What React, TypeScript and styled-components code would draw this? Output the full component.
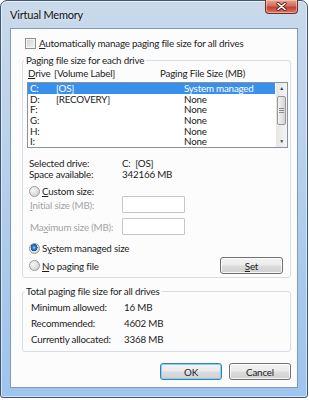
import React from 'react'
import styled, { createGlobalStyle, css } from 'styled-components'

const GlobalStyle = createGlobalStyle`
	html, body {
		margin: 0;
		padding: 0;
		background: #ffffff;
	}
	body {
		font-family: Lato, 'Liberation Sans', sans-serif;
		font-size: 9.8px;
		letter-spacing: -0.2px;
		color: #1c1c1c;
	}
`

const drives = [
	{ letter: 'C:', label: '[OS]', size: 'System managed', selected: true },
	{ letter: 'D:', label: '[RECOVERY]', size: 'None' },
	{ letter: 'F:', label: '', size: 'None' },
	{ letter: 'G:', label: '', size: 'None' },
	{ letter: 'H:', label: '', size: 'None' },
	{ letter: 'I:', label: '', size: 'None' },
]

const totals = [
	{ label: 'Minimum allowed:', value: '16 MB' },
	{ label: 'Recommended:', value: '4602 MB' },
	{ label: 'Currently allocated:', value: '3368 MB' },
]

function App() {
	return (
		<>
			<GlobalStyle />
			<Window>
				<TitleBar>
					<Title>Virtual Memory</Title>
					<CloseButton>
						<svg width="11" height="9" viewBox="0 0 11 9">
							<path
								d="M2 1.5 L9 7.5 M9 1.5 L2 7.5"
								stroke="#5a2020"
								strokeWidth="3.2"
								strokeLinecap="round"
							/>
							<path
								d="M2 1.5 L9 7.5 M9 1.5 L2 7.5"
								stroke="#ffffff"
								strokeWidth="1.6"
								strokeLinecap="round"
							/>
						</svg>
					</CloseButton>
				</TitleBar>
				<Client>
					<CheckRow>
						<CheckBox />
						<span>
							<u>A</u>utomatically manage paging file size for all drives
						</span>
					</CheckRow>

					<GroupBox $top={5} $bottom={3}>
						<Legend>Paging file size for each drive</Legend>
						<ListHeader>
							<DriveCol>
								<u>D</u>rive
							</DriveCol>
							<LabelCol>[Volume Label]</LabelCol>
							<span>Paging File Size (MB)</span>
						</ListHeader>
						<ListBox>
							<Rows>
								{drives.map((d) => (
									<DriveRow key={d.letter} $selected={!!d.selected}>
										<DriveCol>{d.letter}</DriveCol>
										<LabelCol $wide>{d.label}</LabelCol>
										<span>{d.size}</span>
									</DriveRow>
								))}
							</Rows>
							<ScrollBar>
								<Arrow>▲</Arrow>
								<Track>
									<Thumb>
										<Grip />
										<Grip />
										<Grip />
									</Thumb>
								</Track>
								<Arrow>▼</Arrow>
							</ScrollBar>
						</ListBox>

						<InfoRows>
							<InfoRow>
								<InfoLabel>Selected drive:</InfoLabel>
								<span>C:&nbsp;&nbsp;[OS]</span>
							</InfoRow>
							<InfoRow>
								<InfoLabel>Space available:</InfoLabel>
								<span>342166 MB</span>
							</InfoRow>
						</InfoRows>

						<RadioRow $top={5}>
							<Radio />
							<span>
								<u>C</u>ustom size:
							</span>
						</RadioRow>
						<FieldRow $top={-1}>
							<FieldLabel>
								<u>I</u>nitial size (MB):
							</FieldLabel>
							<TextBox />
						</FieldRow>
						<FieldRow $top={5}>
							<FieldLabel>
								Ma<u>x</u>imum size (MB):
							</FieldLabel>
							<TextBox />
						</FieldRow>
						<RadioRow $top={7}>
							<Radio $checked />
							<span>
								S<u>y</u>stem managed size
							</span>
						</RadioRow>
						<BottomRow>
							<RadioRow>
								<Radio />
								<span>
									<u>N</u>o paging file
								</span>
							</RadioRow>
							<PushButton $width={63}>
								<u>S</u>et
							</PushButton>
						</BottomRow>
					</GroupBox>

					<GroupBox $top={7} $bottom={4}>
						<Legend>Total paging file size for all drives</Legend>
						<TotalList>
							{totals.map((t) => (
								<TotalRow key={t.label}>
									<TotalLabel>{t.label}</TotalLabel>
									<span>{t.value}</span>
								</TotalRow>
							))}
						</TotalList>
					</GroupBox>

					<ButtonBar>
						<PushButton $width={62} $default>
							OK
						</PushButton>
						<PushButton $width={62}>Cancel</PushButton>
					</ButtonBar>
				</Client>
			</Window>
		</>
	)
}

const Window = styled.div`
	width: 308px;
	height: 398px;
	box-sizing: border-box;
	display: flex;
	flex-direction: column;
	border: 1px solid #3e5873;
	border-radius: 7px 7px 3px 3px;
	background: linear-gradient(
		180deg,
		#c9d9ea 0%,
		#bcd3ec 30%,
		#a9c9ec 70%,
		#9fc4ee 100%
	);
	box-shadow: inset 0 0 0 1px rgba(255, 255, 255, 0.55);
	padding: 0 9px 9px 9px;
`

const TitleBar = styled.div`
	height: 27px;
	display: flex;
	align-items: flex-start;
	justify-content: space-between;
`

const Title = styled.div`
	font-family: Lato, 'Liberation Sans', sans-serif;
	font-size: 11px;
	letter-spacing: -0.2px;
	color: #101010;
	margin-top: 7px;
	text-shadow: 0 0 6px rgba(255, 255, 255, 0.9);
`

const CloseButton = styled.div`
	width: 33px;
	height: 14px;
	margin-top: -1px;
	display: flex;
	align-items: center;
	justify-content: center;
	box-sizing: border-box;
	border: 1px solid #6b3030;
	border-top: none;
	border-radius: 0 0 4px 4px;
	background: linear-gradient(180deg, #e8a493 0%, #d46e5c 45%, #c2412c 55%, #d9776a 100%);
	box-shadow: inset 0 0 0 1px rgba(255, 220, 210, 0.5);
`

const Client = styled.div`
	flex: 1;
	background: #fcfcfc;
	border: 1px solid #8199b4;
	display: flex;
	flex-direction: column;
	padding: 0 6px 0 11px;
`

const CheckRow = styled.label`
	display: flex;
	align-items: center;
	gap: 3px;
	margin: 9px 0 0 3px;
	height: 11px;
	line-height: 11px;
`

const CheckBox = styled.span`
	width: 11px;
	height: 11px;
	box-sizing: border-box;
	border: 1px solid #8f8f8f;
	background: linear-gradient(135deg, #d0d0d0, #f4f4f4);
	box-shadow: inset 0 0 0 1px #f4f4f4;
	flex: none;
`

const GroupBox = styled.fieldset<{ $top: number; $bottom: number }>`
	margin: ${(p) => p.$top}px 0 0 0;
	width: 269px;
	box-sizing: border-box;
	border: 1px solid #d5dee6;
	border-radius: 3px;
	padding: 0 2px ${(p) => p.$bottom}px 4px;
	min-width: 0;
`

const Legend = styled.legend`
	padding: 0 2px;
	margin-left: -3px;
	height: 12px;
	line-height: 12px;
	color: #1c1c1c;
`

const DriveCol = styled.span`
	width: 26px;
	flex: none;
	padding-left: 1px;
`

const LabelCol = styled.span<{ $wide?: boolean }>`
	width: ${(p) => (p.$wide ? 128 : 106)}px;
	flex: none;
`

const ListHeader = styled.div`
	display: flex;
	height: 12px;
	line-height: 12px;
	margin: 1px 0 3px 0;
`

const ListBox = styled.div`
	display: flex;
	width: 261px;
	height: 66px;
	box-sizing: border-box;
	border: 1px solid #8a929c;
	background: #ffffff;
`

const Rows = styled.div`
	flex: 1;
	display: flex;
	flex-direction: column;
`

const DriveRow = styled.div<{ $selected: boolean }>`
	display: flex;
	height: 10.7px;
	line-height: 11px;
	margin-right: 1px;
	padding-left: 1px;
	${(p) =>
		p.$selected &&
		css`
			background: #3990ec;
			color: #ffffff;
		`}
`

const ScrollBar = styled.div`
	width: 11px;
	flex: none;
	display: flex;
	flex-direction: column;
	background: linear-gradient(90deg, #e6e6e6, #f4f4f4);
`

const Arrow = styled.div`
	height: 11px;
	font-size: 5px;
	line-height: 11px;
	text-align: center;
	color: #3b3b3b;
`

const Track = styled.div`
	flex: 1;
	padding: 2px 0 6px 0;
`

const Thumb = styled.div`
	height: 29px;
	margin: 0 1px;
	box-sizing: border-box;
	border: 1px solid #979797;
	border-radius: 2px;
	background: linear-gradient(90deg, #f2f2f2, #e2e2e2 60%, #d4d4d4);
	display: flex;
	flex-direction: column;
	align-items: center;
	justify-content: center;
	gap: 1px;
`

const Grip = styled.div`
	width: 5px;
	height: 1px;
	background: #8c8c8c;
`

const InfoRows = styled.div`
	margin-top: 10px;
	display: flex;
	flex-direction: column;
`

const InfoRow = styled.div`
	display: flex;
	height: 11px;
	line-height: 11px;
	padding-left: 2px;
`

const InfoLabel = styled.span`
	width: 93px;
	flex: none;
`

const RadioRow = styled.div<{ $top?: number }>`
	display: flex;
	align-items: center;
	gap: 2px;
	height: 12px;
	line-height: 12px;
	margin-top: ${(p) => p.$top ?? 0}px;
	padding-left: 2px;
`

const Radio = styled.span<{ $checked?: boolean }>`
	width: 11px;
	height: 11px;
	flex: none;
	box-sizing: border-box;
	border-radius: 50%;
	border: 1px solid #9a9a9a;
	background: radial-gradient(circle at 35% 35%, #fafafa, #d6d6d6 70%, #c4c4c4);
	${(p) =>
		p.$checked &&
		css`
			background: radial-gradient(
					circle at 45% 40%,
					#9fd6ff 0,
					#2d86d6 1.6px,
					#16508f 3.4px,
					transparent 3.6px
				),
				radial-gradient(circle at 35% 35%, #fafafa, #d6d6d6 70%, #c4c4c4);
		`}
`

const FieldRow = styled.div<{ $top: number }>`
	display: flex;
	align-items: center;
	margin-top: ${(p) => p.$top}px;
	height: 17px;
	padding-left: 3px;
`

const FieldLabel = styled.span`
	width: 92px;
	flex: none;
	color: #a3a3a3;
`

const TextBox = styled.div`
	width: 63px;
	height: 17px;
	box-sizing: border-box;
	border: 1px solid #c6c6c6;
	border-radius: 1px;
	background: #ffffff;
`

const BottomRow = styled.div`
	display: flex;
	align-items: center;
	justify-content: space-between;
	margin-top: 3px;
	padding-right: 5px;
	height: 17px;
`

const PushButton = styled.div<{ $width: number; $default?: boolean }>`
	width: ${(p) => p.$width}px;
	height: 17px;
	box-sizing: border-box;
	display: flex;
	align-items: center;
	justify-content: center;
	border: 1px solid #707070;
	border-radius: 3px;
	background: linear-gradient(180deg, #f4f4f4 0%, #ebebeb 48%, #dcdcdc 52%, #d0d0d0 100%);
	box-shadow: inset 0 0 0 1px rgba(255, 255, 255, 0.8);
	color: #1c1c1c;
	${(p) =>
		p.$default &&
		css`
			border-color: #3c7fb1;
			box-shadow: inset 0 0 0 1px #7fd3f7;
		`}
`

const TotalList = styled.div`
	display: flex;
	flex-direction: column;
	padding-top: 2px;
`

const TotalRow = styled.div`
	display: flex;
	height: 16px;
	line-height: 16px;
	padding-left: 4px;
`

const TotalLabel = styled.span`
	width: 93px;
	flex: none;
`

const ButtonBar = styled.div`
	display: flex;
	justify-content: flex-end;
	gap: 7px;
	margin-top: 11px;
	width: 269px;
`

export default App
